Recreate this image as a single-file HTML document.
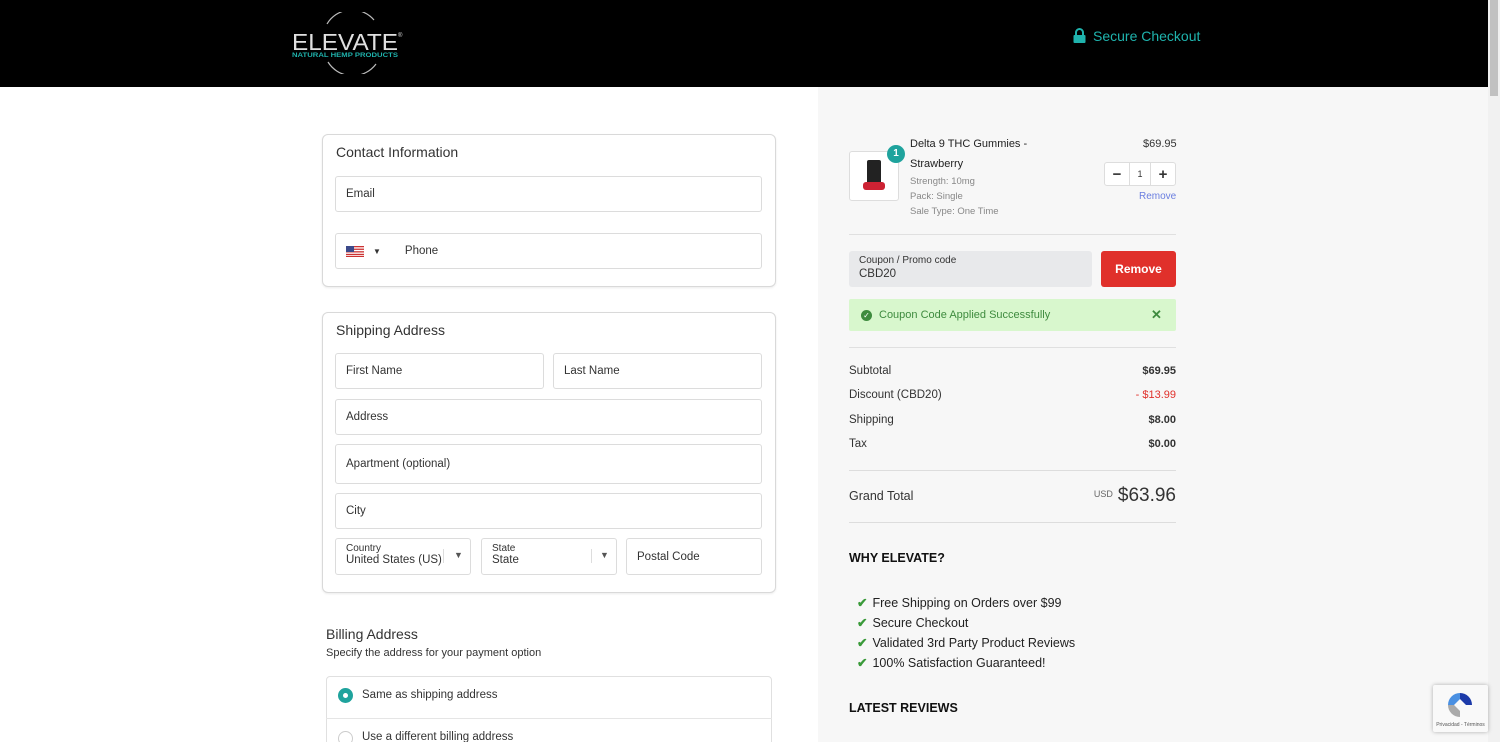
<!DOCTYPE html>
<html><head><style>
*{box-sizing:border-box;margin:0;padding:0}
html,body{width:1500px;height:742px;overflow:hidden}
body{font-family:"Liberation Sans",sans-serif;background:#fff;position:relative;color:#333}
.hdr{position:absolute;left:0;top:0;width:1488px;height:87px;background:#000}
.sb{position:absolute;left:1488px;top:0;width:12px;height:742px;background:#f1f1f1}
.sb div{position:absolute;left:2px;top:0;width:8px;height:96px;background:#c1c1c1}
.right{position:absolute;left:818px;top:87px;width:670px;height:655px;background:#f7f7f7}
.a{position:absolute}
.card{position:absolute;border:1px solid #d9d9d9;border-radius:6px;background:#fff;box-shadow:0 1px 2px rgba(0,0,0,.08)}
.inp{position:absolute;border:1px solid #dcdcdc;border-radius:3px;background:#fff;font-size:11.5px;color:#333;padding-left:10px;display:flex;align-items:center}
.h{font-size:14px;color:#333}
.row{position:absolute;left:849px;width:327px;font-size:11.5px;color:#333;display:flex;justify-content:space-between}
.chk{position:absolute;left:857px;font-size:12.5px;color:#222}
.chk span{color:#3a9a3a;font-weight:bold;margin-right:5px}
</style></head><body>
<div class="hdr">
  <svg class="a" style="left:290px;top:12px" width="120" height="62" viewBox="0 0 120 62">
    <path d="M37 12 A29 29 0 0 1 84 8" stroke="#bbb" stroke-width="1.2" fill="none"/>
    <path d="M38 50 A29 29 0 0 0 86 52" stroke="#bbb" stroke-width="1.2" fill="none"/>
    <text x="2" y="38" fill="#e0e0e0" font-size="23" font-family="Liberation Sans" textLength="106" lengthAdjust="spacingAndGlyphs">ELEVATE</text>
    <text x="108" y="25" fill="#ddd" font-size="6">®</text>
    <text x="2" y="45" fill="#1fb3ad" font-size="6.5" font-weight="bold" textLength="106" lengthAdjust="spacingAndGlyphs">NATURAL HEMP PRODUCTS</text>
  </svg>
  <svg class="a" style="left:1073px;top:28px" width="13" height="15" viewBox="0 0 13 15"><path d="M3 7V4.5a3.5 3.5 0 0 1 7 0V7" stroke="#1fb3ad" stroke-width="2" fill="none"/><rect x="0.5" y="7" width="12" height="8" rx="1" fill="#1fb3ad"/></svg>
  <div class="a" style="left:1093px;top:28px;font-size:14px;color:#1fb3ad">Secure Checkout</div>
</div>
<div class="sb"><div></div></div>
<div class="right"></div>

<div class="card" style="left:322px;top:134px;width:454px;height:153px"></div>
<div class="a h" style="left:336px;top:144px">Contact Information</div>
<div class="inp" style="left:335px;top:176px;width:427px;height:36px">Email</div>
<div class="inp" style="left:335px;top:233px;width:427px;height:36px">
  <svg width="18" height="11" viewBox="0 0 18 11"><rect width="18" height="11" fill="#fff"/><g fill="#c33"><rect y="0" width="18" height="1.3"/><rect y="2.6" width="18" height="1.3"/><rect y="5.2" width="18" height="1.3"/><rect y="7.8" width="18" height="1.3"/><rect y="9.9" width="18" height="1.1"/></g><rect width="8" height="6" fill="#3c4a8a"/></svg>
  <span style="font-size:8px;margin-left:9px">▼</span>
  <span style="margin-left:24px">Phone</span>
</div>

<div class="card" style="left:322px;top:312px;width:454px;height:281px"></div>
<div class="a h" style="left:336px;top:322px">Shipping Address</div>
<div class="inp" style="left:335px;top:353px;width:209px;height:36px">First Name</div>
<div class="inp" style="left:553px;top:353px;width:209px;height:36px">Last Name</div>
<div class="inp" style="left:335px;top:399px;width:427px;height:36px">Address</div>
<div class="inp" style="left:335px;top:444px;width:427px;height:40px">Apartment (optional)</div>
<div class="inp" style="left:335px;top:493px;width:427px;height:36px">City</div>
<div class="inp" style="left:335px;top:538px;width:136px;height:37px;display:block;padding-top:4px"><div style="font-size:10px">Country</div><div>United States (US)</div><span class="a" style="left:107px;top:10px;width:1px;height:14px;background:#ddd"></span><span class="a" style="left:118px;top:11px;font-size:9px;color:#555">▼</span></div>
<div class="inp" style="left:481px;top:538px;width:136px;height:37px;display:block;padding-top:4px"><div style="font-size:10px">State</div><div>State</div><span class="a" style="left:109px;top:10px;width:1px;height:14px;background:#ddd"></span><span class="a" style="left:118px;top:11px;font-size:9px;color:#555">▼</span></div>
<div class="inp" style="left:626px;top:538px;width:136px;height:37px">Postal Code</div>

<div class="a h" style="left:326px;top:626px">Billing Address</div>
<div class="a" style="left:326px;top:647px;font-size:11px">Specify the address for your payment option</div>
<div class="a" style="left:326px;top:676px;width:446px;height:80px;border:1px solid #e0e0e0;border-radius:4px;background:#fff"></div>
<div class="a" style="left:326px;top:718px;width:446px;height:1px;background:#e5e5e5"></div>
<div class="a" style="left:338px;top:688px;width:15px;height:15px;border-radius:50%;background:#1fa39d"><div style="margin:5px;width:5px;height:5px;border-radius:50%;background:#fff"></div></div>
<div class="a" style="left:362px;top:689px;font-size:11.5px">Same as shipping address</div>
<div class="a" style="left:338px;top:731px;width:15px;height:15px;border-radius:50%;border:1px solid #ccc;background:#fff"></div>
<div class="a" style="left:362px;top:731px;font-size:11.5px">Use a different billing address</div>

<div class="a" style="left:849px;top:151px;width:50px;height:50px;border:1px solid #ddd;border-radius:3px;background:#fff"></div>
<div class="a" style="left:867px;top:160px;width:14px;height:26px;background:#222;border-radius:2px"></div>
<div class="a" style="left:863px;top:182px;width:22px;height:8px;background:#c23;border-radius:3px"></div>
<div class="a" style="left:887px;top:145px;width:18px;height:18px;border-radius:50%;background:#1fa39d;color:#fff;font-size:10px;font-weight:bold;text-align:center;line-height:18px">1</div>
<div class="a" style="left:910px;top:134px;font-size:11px;color:#222;line-height:20px">Delta 9 THC Gummies -<br>Strawberry</div>
<div class="a" style="left:910px;top:174px;font-size:9.5px;color:#888;line-height:15px">Strength: 10mg<br>Pack: Single<br>Sale Type: One Time</div>
<div class="a" style="left:1143px;top:138px;font-size:11px">$69.95</div>
<div class="a" style="left:1104px;top:162px;width:72px;height:24px;border:1px solid #ddd;border-radius:3px;background:#fff;display:flex;font-size:12px;align-items:center">
  <span style="width:24px;text-align:center;font-weight:bold;font-size:15px">−</span><span style="width:22px;text-align:center;font-size:9px;border-left:1px solid #ddd;border-right:1px solid #ddd;line-height:22px">1</span><span style="width:24px;text-align:center;font-weight:bold;font-size:15px">+</span>
</div>
<div class="a" style="left:1139px;top:191px;font-size:10px;color:#6a7ee0">Remove</div>
<div class="a" style="left:849px;top:234px;width:327px;height:1px;background:#e0e0e0"></div>
<div class="a" style="left:849px;top:251px;width:243px;height:36px;background:#e8e9eb;border-radius:3px;padding:4px 10px;font-size:10px">Coupon / Promo code<div style="font-size:11.5px;margin-top:2px">CBD20</div></div>
<div class="a" style="left:1101px;top:251px;width:75px;height:36px;background:#e0302b;border-radius:3px;color:#fff;font-size:12px;font-weight:bold;text-align:center;line-height:36px">Remove</div>
<div class="a" style="left:849px;top:299px;width:327px;height:32px;background:#d8f7cd;border-radius:2px"></div>
<div class="a" style="left:861px;top:310px;width:11px;height:11px;border-radius:50%;background:#3e8b3e;color:#fff;font-size:8px;text-align:center;line-height:11px">✓</div>
<div class="a" style="left:879px;top:309px;font-size:11px;color:#3e8b3e">Coupon Code Applied Successfully</div>
<div class="a" style="left:1151px;top:307px;font-size:13px;color:#3e8b3e;font-weight:bold">✕</div>
<div class="a" style="left:849px;top:347px;width:327px;height:1px;background:#e0e0e0"></div>
<div class="row" style="top:365px"><span>Subtotal</span><b style="font-size:11px">$69.95</b></div>
<div class="row" style="top:389px"><span>Discount (CBD20)</span><span style="color:#e0302b;font-size:11px">- $13.99</span></div>
<div class="row" style="top:414px"><span>Shipping</span><b style="font-size:11px">$8.00</b></div>
<div class="row" style="top:438px"><span>Tax</span><b style="font-size:11px">$0.00</b></div>
<div class="a" style="left:849px;top:470px;width:327px;height:1px;background:#ddd"></div>
<div class="row" style="top:485px;align-items:center"><span style="font-size:12.5px">Grand Total</span><span><span style="font-size:9px;color:#666;margin-right:5px;vertical-align:4px">USD</span><span style="font-size:19px">$63.96</span></span></div>
<div class="a" style="left:849px;top:522px;width:327px;height:1px;background:#ddd"></div>
<div class="a" style="left:849px;top:551px;font-size:12.5px;font-weight:bold;color:#111">WHY ELEVATE?</div>
<div class="chk" style="top:595px"><span>✔</span>Free Shipping on Orders over $99</div>
<div class="chk" style="top:615px"><span>✔</span>Secure Checkout</div>
<div class="chk" style="top:635px"><span>✔</span>Validated 3rd Party Product Reviews</div>
<div class="chk" style="top:655px"><span>✔</span>100% Satisfaction Guaranteed!</div>
<div class="a" style="left:849px;top:701px;font-size:12.5px;font-weight:bold;color:#111">LATEST REVIEWS</div>
<div class="a" style="left:1433px;top:685px;width:55px;height:47px;background:#f9f9f9;box-shadow:0 0 4px rgba(0,0,0,.3);border-radius:2px">
  <svg style="position:absolute;left:13px;top:6px" width="28" height="28" viewBox="0 0 28 28"><path d="M14 2A12 12 0 0 1 26 14h-6l-6-6z" fill="#1c3aa9"/><path d="M2 14A12 12 0 0 1 14 2v6L8 14z" fill="#4a90e2"/><path d="M14 26A12 12 0 0 1 2 14h6l6 6z" fill="#aaa"/></svg>
  <div style="position:absolute;top:37px;width:55px;text-align:center;font-size:5px;color:#555">Privacidad - Términos</div>
</div>
</body></html>
